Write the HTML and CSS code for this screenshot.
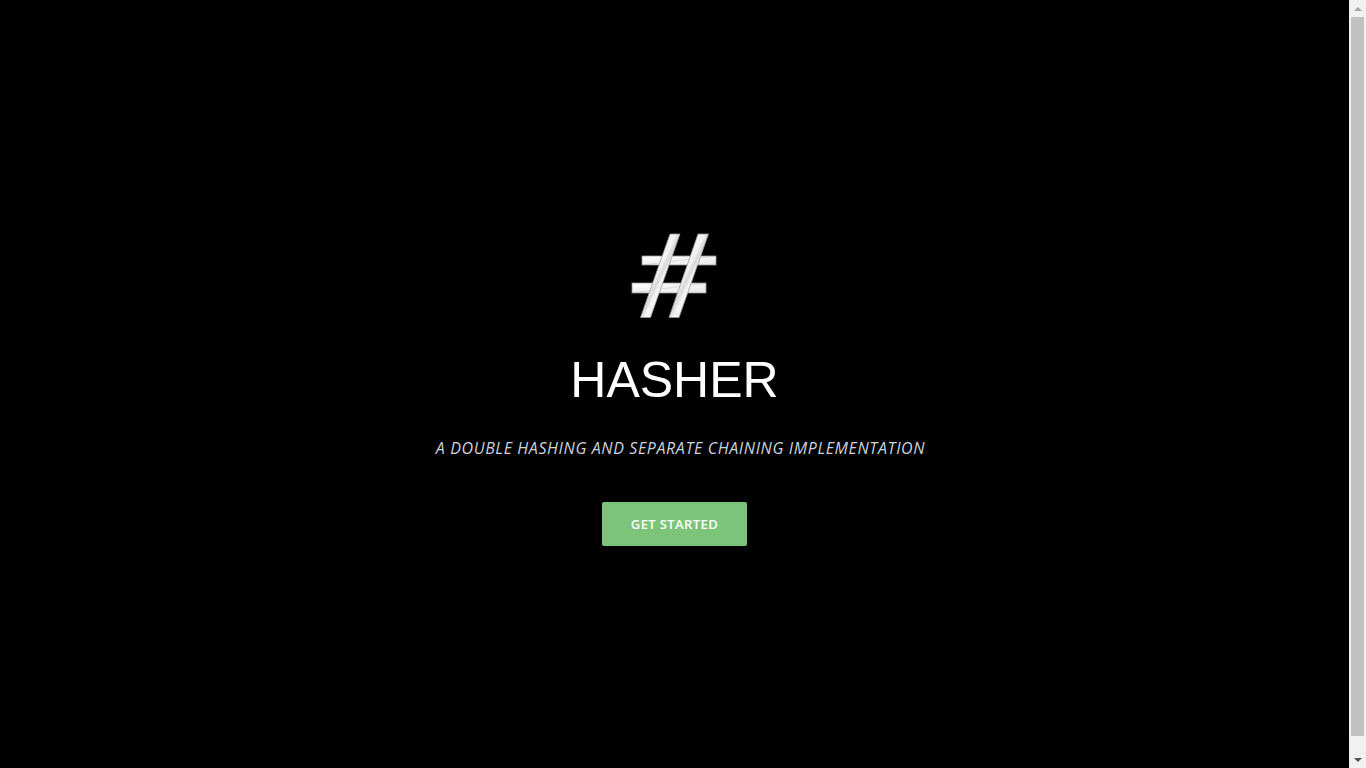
FILE: index.html
```html
<!DOCTYPE html>
<html lang="en">
<head>
<meta charset="utf-8">
<title>Hasher</title>
<link rel="stylesheet" href="styles.css">
</head>
<body>
<section class="hero">
  <div class="hero-inner">
    <svg class="logo" width="90" height="90" viewBox="0 -1 90 90" aria-hidden="true">
      <defs>
        <linearGradient id="g" x1="0" y1="0" x2="1" y2="1">
          <stop offset="0" stop-color="#ffffff"/>
          <stop offset="0.45" stop-color="#f2f2f2"/>
          <stop offset="0.5" stop-color="#d8d8d8"/>
          <stop offset="0.55" stop-color="#f4f4f4"/>
          <stop offset="1" stop-color="#e6e6e6"/>
        </linearGradient>
      </defs>
      <g fill="url(#g)" stroke="#9a9a9a" stroke-width="0.8">
        <rect x="13" y="27" width="74" height="9"/>
        <rect x="3" y="54" width="74" height="10"/>
        <polygon points="41,5 51,5 21.5,88.5 11.5,88.5"/>
        <polygon points="69,5 79.5,5 50,88.5 40,88.5"/>
      </g>
    </svg>
    <h1 class="title">HASHER</h1>
    <p class="subtitle">A DOUBLE HASHING AND SEPARATE CHAINING IMPLEMENTATION</p>
    <a class="btn" href="#">GET STARTED</a>
  </div>
</section>
<div class="scrollbar" aria-hidden="true">
  <div class="sb-btn"><span class="arrow-up"></span></div>
  <div class="sb-track"><div class="sb-thumb"></div></div>
  <div class="sb-btn"><span class="arrow-down"></span></div>
</div>
</body>
</html>
```
FILE: styles.css
```css
html {
  background: #000;
}
body {
  margin: 8px 25px 8px 8px;
  background: #000;
  font-family: "Liberation Sans", Arial, sans-serif;
}
.hero {
  height: 100vh;
  display: flex;
  align-items: center;
  justify-content: center;
}
.hero-inner {
  display: flex;
  flex-direction: column;
  align-items: center;
  padding-bottom: 10px;
}
.logo {
  display: block;
}
.title {
  margin: 33px 0 0;
  font-family: "Liberation Sans", Arial, sans-serif;
  font-weight: 400;
  font-size: 50px;
  line-height: 58px;
  color: #fff;
}
.subtitle {
  margin: 29px 0 0;
  padding-left: 12px;
  font-family: "Open Sans", sans-serif;
  font-style: italic;
  font-size: 16px;
  line-height: 20px;
  color: #cdd4de;
  letter-spacing: 0.62px;
}
.btn {
  margin-top: 44px;
  display: flex;
  align-items: center;
  justify-content: center;
  width: 145px;
  height: 44px;
  background: #7bc47a;
  border-radius: 2px;
  color: #fff;
  text-decoration: none;
  font-family: "Open Sans", sans-serif;
  font-size: 13px;
  font-weight: 600;
  letter-spacing: 0.4px;
}

/* emulated browser scrollbar */
.scrollbar {
  position: fixed;
  top: 0;
  right: 0;
  width: 17px;
  height: 100vh;
  background: #f1f1f1;
  display: flex;
  flex-direction: column;
}
.sb-btn {
  height: 17px;
  display: flex;
  align-items: center;
  justify-content: center;
}
.arrow-up {
  width: 0;
  height: 0;
  border-left: 4px solid transparent;
  border-right: 4px solid transparent;
  border-bottom: 4px solid #a3a3a3;
}
.arrow-down {
  width: 0;
  height: 0;
  border-left: 4px solid transparent;
  border-right: 4px solid transparent;
  border-top: 4px solid #505050;
}
.sb-track {
  flex: 1;
  padding: 0 2px 15px;
  display: flex;
  flex-direction: column;
}
.sb-thumb {
  flex: 1;
  background: #c1c1c1;
}
```
